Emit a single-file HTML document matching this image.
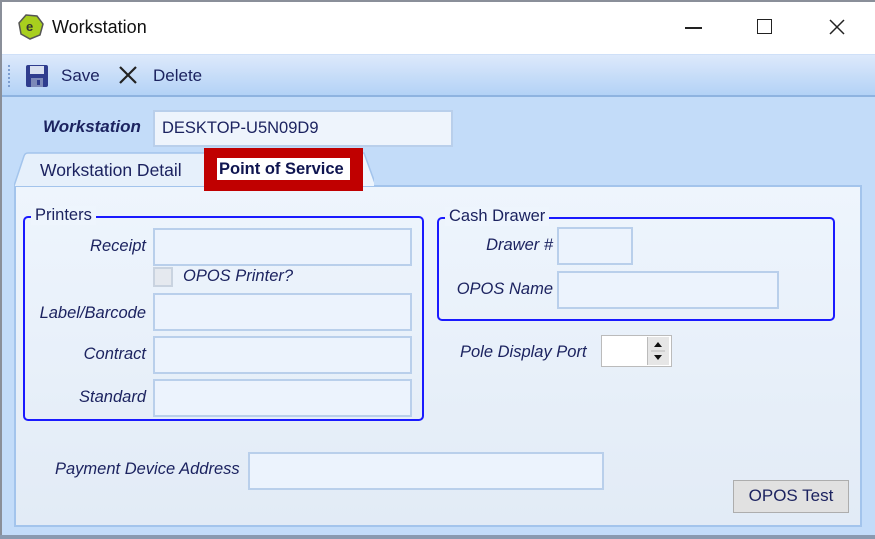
<!DOCTYPE html>
<html><head><style>
*{margin:0;padding:0;box-sizing:border-box}
body{width:875px;height:539px;overflow:hidden;font-family:"Liberation Sans",sans-serif;background:#c3dcf9;position:relative;color:#1c2360}
.a{position:absolute}
.tb{left:0;top:0;width:875px;height:54px;background:#fff;border-top:2px solid #8a8f99;border-left:2px solid #8a8f99}
.tool{left:2px;top:54px;width:873px;height:43px;background:linear-gradient(#dde9fb,#b3d2f6);border-bottom:2px solid #8eb3e0;border-top:1px solid #cfe0f8}
.f{position:absolute;background:#ecf3fd;border:2px solid #b9cfeb}
.l{position:absolute;font-style:italic;font-size:16.5px;text-align:right;color:#1c2360;white-space:nowrap}
.grp{position:absolute;border:2px solid #1a1aff;border-radius:5px}
.gt{position:absolute;background:#eef5fd;font-size:16.5px;padding:0 4px;top:-11px;left:6px}
</style></head><body>
<div class="a" style="left:0;top:0;width:2px;height:539px;background:#8a8f99"></div>
<div class="a tb"></div>
<svg class="a" style="left:18px;top:14px" width="26" height="26" viewBox="0 0 26 26"><polygon points="8,1 19,2 25,10 22,21 12,25 3,20 1,9" fill="#a8cf1e" stroke="#555" stroke-width="1.5"/><text x="8" y="17" font-size="13" font-weight="bold" fill="#333" font-family="Liberation Sans">e</text></svg>
<div class="a" style="left:52px;top:17px;font-size:18px;color:#111">Workstation</div>
<div class="a" style="left:685px;top:27px;width:17px;height:1.5px;background:#222"></div>
<div class="a" style="left:757px;top:19px;width:15px;height:15px;border:1.5px solid #222"></div>
<svg class="a" style="left:829px;top:19px" width="16" height="16"><path d="M1 1L15 15M15 1L1 15" stroke="#222" stroke-width="1.5"/></svg>
<div class="a tool"></div>
<div class="a" style="left:8px;top:65px;width:2px;height:22px;border-left:2px dotted #7d9ed0"></div>
<svg class="a" style="left:25px;top:64px" width="24" height="24" viewBox="0 0 24 24"><rect x="1" y="1" width="22" height="22" rx="2" fill="#2f3d8e"/><rect x="5" y="2" width="14" height="8" fill="#d8e0f0"/><rect x="6" y="14" width="12" height="9" fill="#7c89b8"/><rect x="12" y="16" width="3" height="5" fill="#2f3d8e"/></svg>
<div class="a" style="left:61px;top:66px;font-size:17px">Save</div>
<svg class="a" style="left:118px;top:65px" width="20" height="20"><path d="M2 2L18 18M18 2L2 18" stroke="#222" stroke-width="2.2"/></svg>
<div class="a" style="left:153px;top:66px;font-size:17px">Delete</div>
<div class="a" style="left:43px;top:117px;font-size:17px;font-weight:bold;font-style:italic">Workstation</div>
<div class="f" style="left:153px;top:110px;width:300px;height:37px;background:#eef4fc"></div>
<div class="a" style="left:162px;top:119px;font-size:16.5px">DESKTOP-U5N09D9</div>
<div class="a" style="left:14px;top:185px;width:848px;height:342px;background:linear-gradient(#eef5fd,#e2ebf6);border:2px solid #a3c4ec"></div>
<svg class="a" style="left:14px;top:152px" width="360" height="35"><path d="M0 34L10 4Q11 1 14 1H196L206 34" fill="#e6f0fb" stroke="#a3c4ec" stroke-width="1.5"/><path d="M200 34L200 1H350L362 34" fill="#eef5fd" stroke="#a3c4ec" stroke-width="1.5"/></svg>
<div class="a" style="left:40px;top:160px;font-size:17.5px">Workstation Detail</div>
<div class="a" style="left:204px;top:148px;width:159px;height:43px;background:#c00000"></div>
<div class="a" style="left:217px;top:158px;width:133px;height:22px;background:#fff"></div>
<div class="a" style="left:219px;top:160px;font-size:16.5px;font-weight:bold;color:#0f1550">Point of Service</div>
<div class="grp" style="left:23px;top:216px;width:401px;height:205px"><div class="gt" style="top:-12px;left:6px">Printers</div></div>
<div class="l" style="left:20px;top:237px;width:126px">Receipt</div>
<div class="f" style="left:153px;top:228px;width:259px;height:38px"></div>
<div class="a" style="left:153px;top:267px;width:20px;height:20px;border:2px solid #c9d3e0;background:#e5e9ef"></div>
<div class="l" style="left:183px;top:267px;text-align:left">OPOS Printer?</div>
<div class="l" style="left:20px;top:304px;width:126px">Label/Barcode</div>
<div class="f" style="left:153px;top:293px;width:259px;height:38px"></div>
<div class="l" style="left:20px;top:345px;width:126px">Contract</div>
<div class="f" style="left:153px;top:336px;width:259px;height:38px"></div>
<div class="l" style="left:20px;top:388px;width:126px">Standard</div>
<div class="f" style="left:153px;top:379px;width:259px;height:38px"></div>
<div class="grp" style="left:437px;top:217px;width:398px;height:104px"><div class="gt" style="top:-12px;left:6px">Cash Drawer</div></div>
<div class="l" style="left:440px;top:236px;width:113px">Drawer #</div>
<div class="f" style="left:557px;top:227px;width:76px;height:38px"></div>
<div class="l" style="left:440px;top:280px;width:113px">OPOS Name</div>
<div class="f" style="left:557px;top:271px;width:222px;height:38px"></div>
<div class="l" style="left:460px;top:343px;text-align:left">Pole Display Port</div>
<div class="a" style="left:601px;top:335px;width:71px;height:32px;background:#fff;border:1.5px solid #bbb"></div>
<div class="a" style="left:647px;top:337px;width:22px;height:28px;background:#e6e6e6;border-left:1px solid #bbb"></div>
<svg class="a" style="left:651px;top:339px" width="14" height="24"><path d="M3 8L7 3L11 8Z M3 16L7 21L11 16Z" fill="#111"/><path d="M0 12H14" stroke="#bbb"/></svg>
<div class="l" style="left:55px;top:460px;text-align:left">Payment Device Address</div>
<div class="f" style="left:248px;top:452px;width:356px;height:38px"></div>
<div class="a" style="left:733px;top:480px;width:116px;height:33px;background:#e1e1e1;border:1.5px solid #adadad;font-size:17px;text-align:center;line-height:30px">OPOS Test</div>
<div class="a" style="left:0;top:535px;width:875px;height:4px;background:#8a9ab0"></div>
</body></html>
